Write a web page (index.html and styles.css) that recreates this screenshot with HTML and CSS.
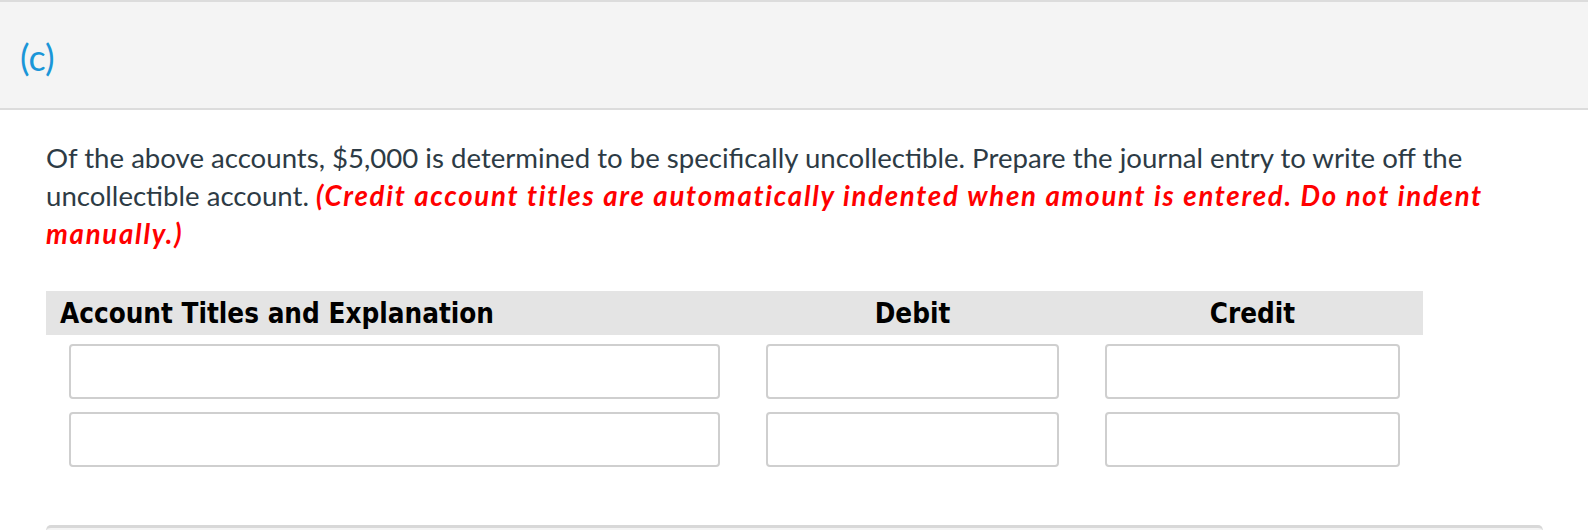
FILE: index.html
```html
<!DOCTYPE html>
<html lang="en">
<head>
  <meta charset="UTF-8" />
  <title>Part (c)</title>
  <link rel="stylesheet" href="styles.css">
</head>
<body>
  <!-- Part heading -->
  <div class="part-bar">
    <span class="part-label">(c)</span>
  </div>

  <div class="question">
    <p class="prompt">
      Of the above accounts, $5,000 is determined to be specifically uncollectible. Prepare the journal entry to write off the uncollectible account.
      <em class="note">(Credit account titles are automatically indented when amount is entered. Do not indent manually.)</em>
    </p>

    <!-- Journal entry table -->
    <div class="journal">
      <div class="journal-head">
        <div class="col-title">Account Titles and Explanation</div>
        <div class="col-amt">Debit</div>
        <div class="col-amt">Credit</div>
      </div>
      <div class="journal-row">
        <div class="cell"><input type="text" class="field"></div>
        <div class="cell"><input type="text" class="field"></div>
        <div class="cell"><input type="text" class="field"></div>
      </div>
      <div class="journal-row">
        <div class="cell"><input type="text" class="field"></div>
        <div class="cell"><input type="text" class="field"></div>
        <div class="cell"><input type="text" class="field"></div>
      </div>
    </div>

    <div class="next-box"></div>
  </div>
</body>
</html>
```

FILE: styles.css
```css
/* Global */
* {
  margin: 0;
  padding: 0;
  box-sizing: border-box;
}

body {
  font-family: 'Lato', 'Open Sans', sans-serif;
  color: #2d3b45;
  background-color: #fff;
  overflow: hidden;
}

/* Part heading bar */
.part-bar {
  height: 110px;
  background-color: #f4f4f4;
  border-top: 2px solid #dcdcdc;
  border-bottom: 2px solid #dcdcdc;
  padding: 35px 0 0 20px;
}

.part-label {
  font-size: 36px;
  line-height: 40px;
  color: #1a96d8;
}

/* Question body */
.question {
  padding: 29px 0 0 46px;
}

.prompt {
  font-size: 27.6px;
  line-height: 38px;
  max-width: 1470px;
}

.note {
  color: #ff0000;
  font-weight: bold;
  font-style: italic;
  letter-spacing: 1.72px;
}

/* Journal table */
.journal {
  width: 1377px;
  margin-top: 38px;
}

.journal-head,
.journal-row {
  display: grid;
  grid-template-columns: 697px 339px 341px;
}

.journal-head {
  background-color: #e4e4e4;
  height: 44px;
  align-items: center;
  font-family: 'DejaVu Sans Condensed', 'DejaVu Sans', sans-serif;
  font-weight: bold;
  font-size: 27.6px;
  color: #000;
}

.col-title {
  padding-left: 14px;
}

.col-amt {
  text-align: center;
}

.journal-row {
  margin-top: 9px;
}

.journal-row + .journal-row {
  margin-top: 13px;
}

.cell {
  padding: 0 23px;
}

.field {
  display: block;
  width: 100%;
  height: 55px;
  border: 2px solid #cfcfcf;
  border-radius: 4px;
  background-color: #fff;
}

/* Next part box, cut off at the bottom */
.next-box {
  width: 1497px;
  height: 40px;
  margin-top: 58px;
  background-color: #f4f4f4;
  border-top: 3px solid #d8d8d8;
  border-left: 1px solid #e2e2e2;
  border-right: 1px solid #e2e2e2;
  border-radius: 5px 5px 0 0;
}
```
